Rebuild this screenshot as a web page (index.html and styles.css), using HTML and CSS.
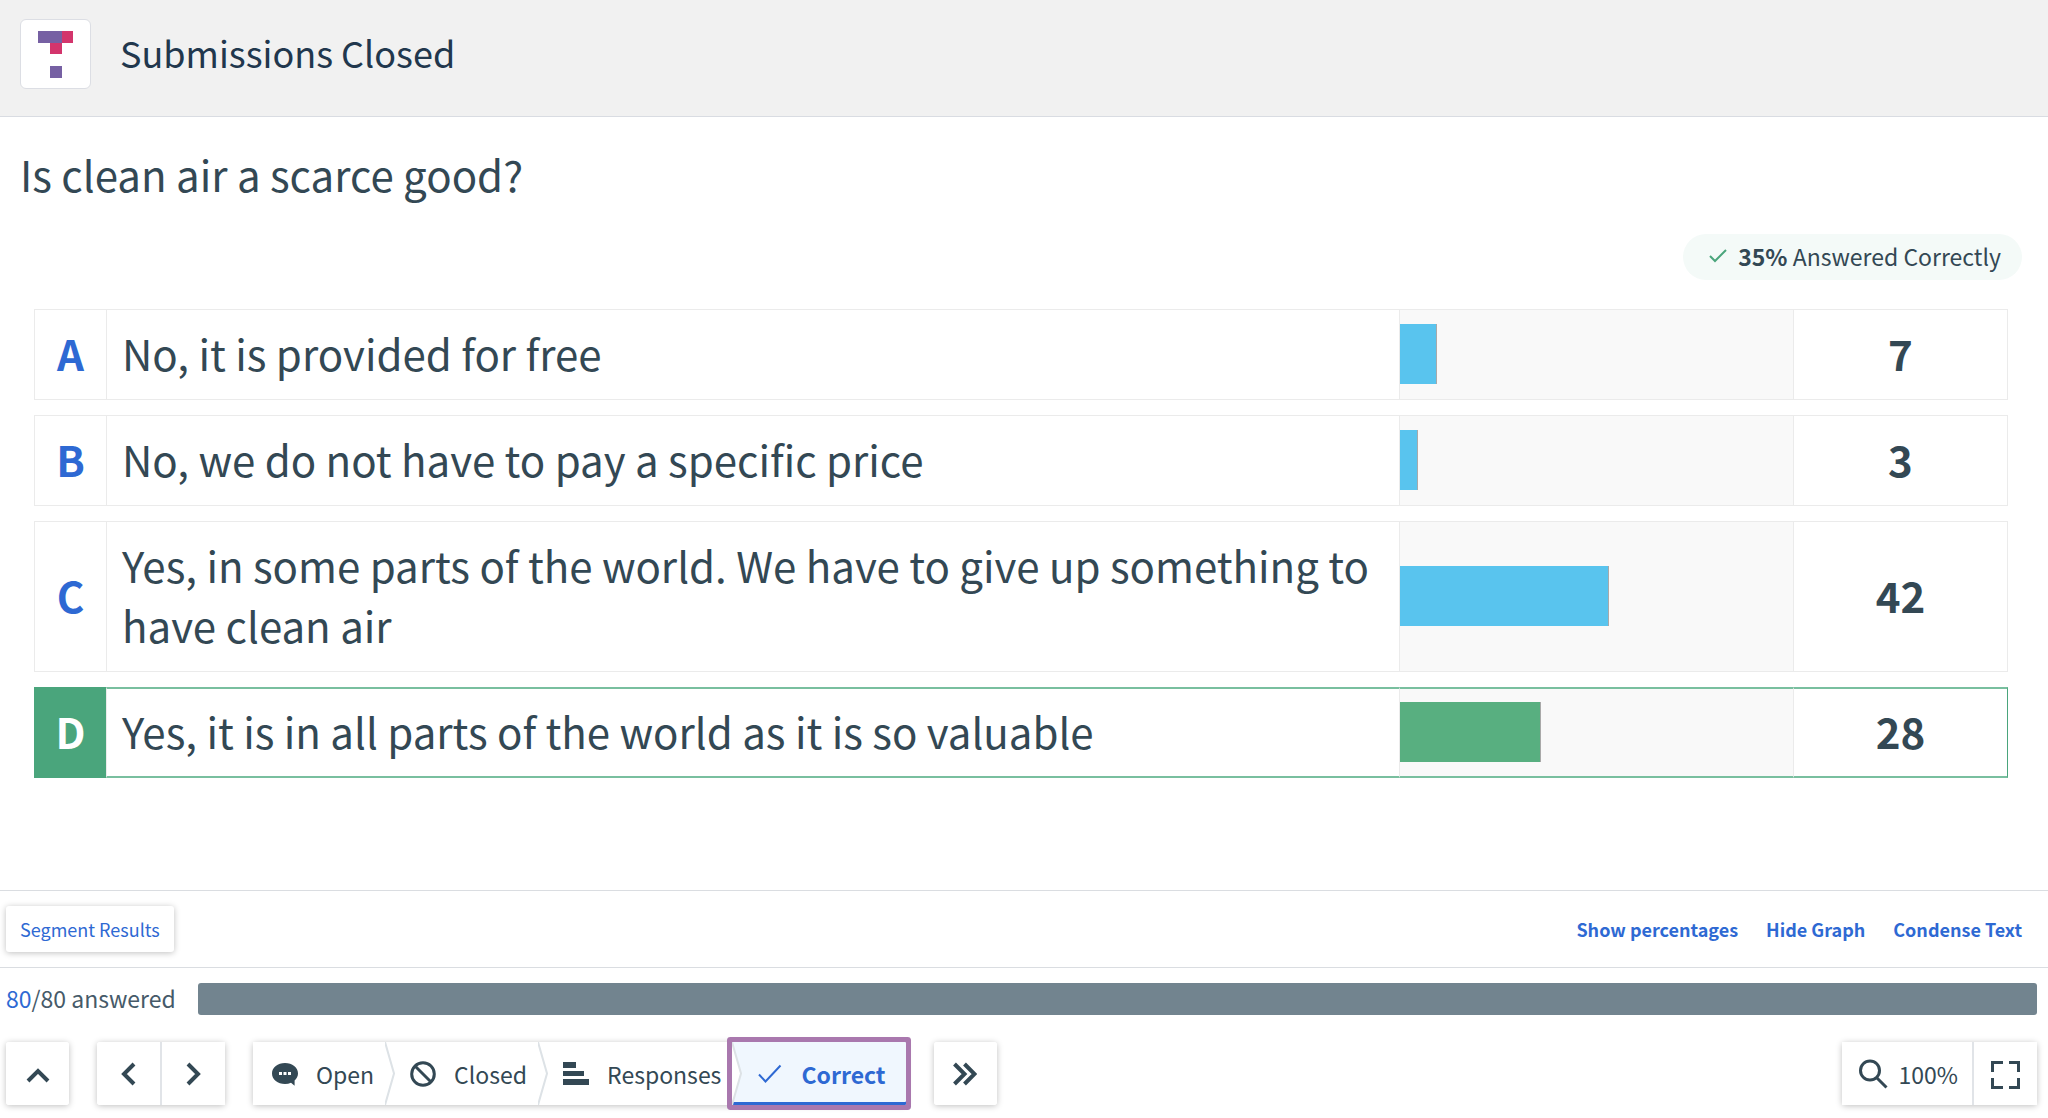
FILE: index.html
```html
<!DOCTYPE html>
<html lang="en">
<head>
    <meta charset="UTF-8">
    <meta name="viewport" content="width=device-width, initial-scale=1.0">
    <title>Submissions Closed</title>
    <link rel="stylesheet" href="styles.css">
</head>
<body>

<header class="header">
    <div class="logo">
        <svg width="36" height="48" viewBox="0 0 36 48" shape-rendering="crispEdges">
            <path fill="#7660a3" d="M0 1h24v12H0zM12 36h12v12H12z"/>
            <path fill="#d3356c" d="M24 1h11v12H24zM12 13h12v11H12z"/>
        </svg>
    </div>
    <h1 class="status">Submissions Closed</h1>
</header>

<main class="content">
    <h2 class="question">Is clean air a scarce good?</h2>

    <div class="summary">
        <svg width="18" height="16" viewBox="0 0 18 16" fill="none" stroke="#4aa57c" stroke-width="2"><path d="M1 8l5 5L17 2"/></svg>
        <span><strong>35%</strong> Answered Correctly</span>
    </div>

    <table class="results">
        <colgroup>
            <col class="col-letter">
            <col>
            <col class="col-graph">
            <col class="col-count">
        </colgroup>
        <tbody>
            <tr>
                <th scope="row">A</th>
                <td class="answer">No, it is provided for free</td>
                <td class="graph"><div class="bar" style="width: 8.75%"></div></td>
                <td class="count">7</td>
            </tr>
            <tr>
                <th scope="row">B</th>
                <td class="answer">No, we do not have to pay a specific price</td>
                <td class="graph"><div class="bar" style="width: 3.75%"></div></td>
                <td class="count">3</td>
            </tr>
            <tr>
                <th scope="row">C</th>
                <td class="answer">Yes, in some parts of the world. We have to give up something to have clean air</td>
                <td class="graph"><div class="bar" style="width: 52.5%"></div></td>
                <td class="count">42</td>
            </tr>
            <tr class="correct">
                <th scope="row">D</th>
                <td class="answer">Yes, it is in all parts of the world as it is so valuable</td>
                <td class="graph"><div class="bar" style="width: 35%"></div></td>
                <td class="count">28</td>
            </tr>
        </tbody>
    </table>
</main>

<footer class="footer">
    <!-- result options -->
    <div class="options">
        <button class="segment-btn" type="button">Segment Results</button>
        <div class="links">
            <a href="#">Show percentages</a>
            <a href="#">Hide Graph</a>
            <a href="#">Condense Text</a>
        </div>
    </div>

    <!-- answered count -->
    <div class="progress">
        <span class="answered"><span class="answered-now">80</span>/80 answered</span>
        <div class="track"><div class="track-fill" style="width: 100%"></div></div>
    </div>

    <!-- presenter controls -->
    <div class="controls">
        <div class="group">
            <button class="icon-btn" type="button" aria-label="Expand">
                <svg width="24" height="24" viewBox="0 0 24 24" fill="none" stroke="currentColor" stroke-width="4"><path d="M2 19L12 9l10 10"/></svg>
            </button>
        </div>
        <div class="group">
            <button class="icon-btn" type="button" aria-label="Previous">
                <svg width="24" height="24" viewBox="0 0 24 24" fill="none" stroke="currentColor" stroke-width="4"><path d="M17 2L7 12l10 10"/></svg>
            </button>
            <button class="icon-btn" type="button" aria-label="Next">
                <svg width="24" height="24" viewBox="0 0 24 24" fill="none" stroke="currentColor" stroke-width="4"><path d="M6 2l10 10L6 22"/></svg>
            </button>
        </div>
        <div class="group">
            <button class="tab" type="button">
                <svg class="tab-icon" width="26" height="26" viewBox="0 0 26 26"><path fill="currentColor" d="M13 2C5.800 2 0 6.600 0 12.500S5.800 23 13 23c2.200 0 4.200-.4 6-1.200l3.600 3V19.500c2.100-1.900 3.400-4.300 3.400-7C26 6.600 20.200 2 13 2z"/><path fill="#fff" d="M7 11h3v3H7zM11.500 11h3v3h-3zM16 11h3v3h-3z"/></svg>
                Open
            </button>
            <button class="tab" type="button">
                <svg class="divider" width="10" height="63" viewBox="0 0 10 63"><path fill="none" stroke="#dde2e6" stroke-width="2" d="M0 0l9 31.500L0 63"/></svg>
                <svg class="tab-icon" width="26" height="26" viewBox="0 0 26 26" fill="none" stroke="currentColor" stroke-width="3"><circle cx="13" cy="13" r="11.300"/><path d="M5 5l16 16"/></svg>
                Closed
            </button>
            <button class="tab" type="button">
                <svg class="divider" width="10" height="63" viewBox="0 0 10 63"><path fill="none" stroke="#dde2e6" stroke-width="2" d="M0 0l9 31.500L0 63"/></svg>
                <svg class="tab-icon" width="26" height="26" viewBox="0 0 26 26"><path fill="currentColor" d="M0 1h13v6H0zM0 10h21v5H0zM0 18h26v6H0z"/></svg>
                Responses
            </button>
            <button class="tab active" type="button">
                <svg class="divider" width="10" height="63" viewBox="0 0 10 63"><path fill="#fff" stroke="#dde2e6" stroke-width="2" d="M0 0l9 31.500L0 63"/></svg>
                <svg class="tab-icon" width="26" height="26" viewBox="0 0 26 26" fill="none" stroke="currentColor" stroke-width="2"><path d="M2 13.500l6.500 7L23.500 4.500"/></svg>
                Correct
            </button>
        </div>
        <div class="group">
            <button class="icon-btn" type="button" aria-label="Skip to next question">
                <svg width="24" height="24" viewBox="0 0 24 24" fill="none" stroke="currentColor" stroke-width="4"><path d="M1.500 2L11.500 12l-10 10M11.500 2l10 10-10 10"/></svg>
            </button>
        </div>
        <div class="group view-group">
            <button class="zoom-btn" type="button">
                <svg width="30" height="30" viewBox="0 0 30 30" fill="none" stroke="currentColor" stroke-width="3"><circle cx="12" cy="11.500" r="9.500"/><path d="M18.500 18.500l10 10"/></svg>
                100%
            </button>
            <button class="icon-btn" type="button" aria-label="Full screen">
                <svg width="30" height="30" viewBox="0 0 30 30" fill="none" stroke="currentColor" stroke-width="3"><path d="M1.500 13V3.500H12M18 3.500h9.500V13M27.500 19v9.500H18M12 28.500H1.500V19"/></svg>
            </button>
        </div>
    </div>
</footer>

</body>
</html>
```
FILE: styles.css
```css
* {
    box-sizing: border-box;
}
body {
    display: flex;
    flex-direction: column;
    min-height: 100vh;
    margin: 0;
    font-family: "Noto Sans CJK JP", "Noto Sans", sans-serif;
    color: #334854;
    background-color: #fff;
}
button {
    font-family: inherit;
    color: inherit;
    border: none;
    background-color: #fff;
    cursor: pointer;
}
svg {
    display: block;
    flex: none;
}

/* header */
.header {
    display: flex;
    gap: 29px;
    padding: 19px 20px 27px;
    background-color: #f1f1f1;
    border-bottom: 1px solid #d9dce2;
}
.logo {
    display: flex;
    justify-content: center;
    align-items: center;
    width: 71px;
    height: 70px;
    background-color: #fff;
    border: 1px solid #dcdee4;
    border-radius: 6px;
}
.status {
    margin: 0;
    font-size: 36px;
    font-weight: 400;
    line-height: 66px;
    color: #21374d;
}

/* question and results */
.content {
    flex: 1;
    display: flex;
    flex-direction: column;
    padding-top: 27px;
}
.question {
    margin: 0 20px;
    font-size: 42px;
    font-weight: 400;
    line-height: 60px;
}
.summary {
    display: flex;
    align-items: center;
    align-self: flex-end;
    gap: 11px;
    height: 46px;
    margin: 30px 26px 14px;
    padding: 0 21px 2px 26px;
    border-radius: 23px;
    background-color: #f4faf8;
    font-size: 23px;
}
.results {
    width: calc(100% - 74px);
    margin: 0 40px 0 34px;
    table-layout: fixed;
    border-collapse: separate;
    border-spacing: 0 15px;
    font-size: 42px;
    line-height: 60px;
}
.col-letter {
    width: 72px;
}
.col-graph {
    width: 394px;
}
.col-count {
    width: 215px;
}
.results th,
.results td {
    padding: 13px 0 16px;
    border: 1px solid #ebebeb;
    border-right: none;
    text-align: center;
}
.results th {
    color: #2e69d3;
}
.results .answer {
    padding-left: 15px;
    text-align: left;
}
.results .graph {
    padding: 14px 0 15px;
    background-color: #f9f9f9;
}
.results .count {
    border-right: 1px solid #ebebeb;
    font-weight: 700;
}
.bar {
    box-sizing: content-box;
    height: 60px;
    padding-right: 2px;
    border-right: 1px solid #a9a9a9;
    background-color: #59c4ee;
    background-clip: padding-box;
}
.results .correct th {
    color: #fff;
    background-color: #4aa57c;
    border-color: #4aa57c;
}
.results .correct td {
    border-top: 2px solid #79bf9f;
    border-bottom: 2px solid #79bf9f;
}
.results .correct .count {
    border-right-color: #4aa57c;
}
.results .correct .graph {
    padding: 13px 0 14px;
}
.results .correct .answer,
.results .correct .count {
    padding-top: 12px;
    padding-bottom: 15px;
}
.correct .bar {
    background-color: #58af80;
}

/* footer */
.footer {
    border-top: 1px solid #dadde1;
}
.options {
    display: flex;
    justify-content: space-between;
    align-items: center;
    height: 76px;
    padding: 0 26px 0 6px;
    font-size: 18px;
}
.segment-btn {
    height: 46px;
    padding: 0 14px;
    border-radius: 3px;
    font-size: 18px;
    color: #2e69d3;
    box-shadow: 0 1px 6px rgba(0, 0, 0, 0.25);
}
.links {
    display: flex;
    gap: 28px;
}
.links a {
    font-weight: 700;
    color: #2e69d3;
    text-decoration: none;
}
.progress {
    display: flex;
    align-items: center;
    gap: 22px;
    padding: 15px 11px 0 6px;
    border-top: 1px solid #dadde1;
    font-size: 23px;
    line-height: 30px;
    color: #465a69;
}
.answered {
    padding-bottom: 2px;
}
.answered-now {
    color: #2e69d3;
}
.track {
    flex: 1;
    height: 32px;
}
.track-fill {
    height: 100%;
    border-radius: 3px;
    background-color: #72848f;
}
.controls {
    display: flex;
    gap: 28px;
    padding: 27px 11px 13px 6px;
}
.group {
    display: flex;
    height: 63px;
    border-radius: 3px;
    background-color: #fff;
    box-shadow: 0 1px 6px rgba(0, 0, 0, 0.25);
}
.icon-btn {
    display: flex;
    justify-content: center;
    align-items: center;
    width: 63px;
    padding: 0;
    border-radius: 3px;
}
.group button + .icon-btn {
    width: 65px;
    border-left: 2px solid #e1e4e8;
    border-radius: 0;
}
.tab {
    display: flex;
    align-items: center;
    padding: 0 11px 0 0;
    font-size: 23px;
}
.tab-icon {
    margin: 0 18px 0 15px;
}
.tab:first-child .tab-icon {
    margin-left: 19px;
}
.tab.active {
    padding-right: 20px;
    font-weight: 700;
    color: #2e69d3;
    background-color: #f0f7fe;
    box-shadow: inset 0 -3px #2e69d3, 0 0 0 5px #a978ae;
    border-radius: 1px;
}
.view-group {
    margin-left: auto;
}
.zoom-btn {
    display: flex;
    align-items: center;
    gap: 11px;
    padding: 0 14px 0 16px;
    font-size: 23px;
}
```
